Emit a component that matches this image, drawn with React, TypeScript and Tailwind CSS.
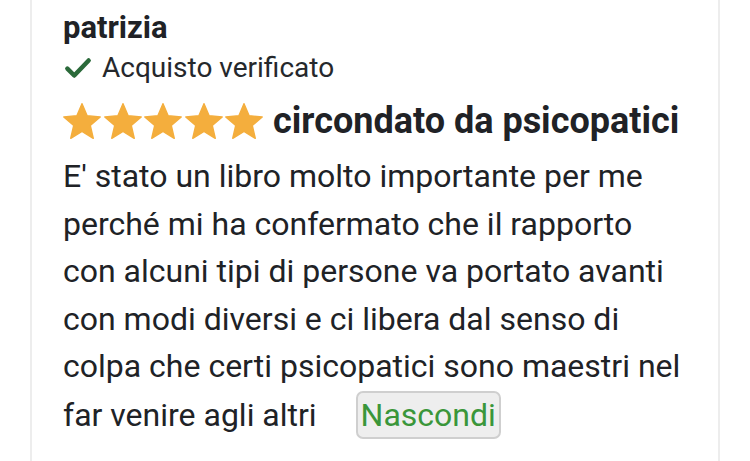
import React from "react";

const Star = () => (
  <svg viewBox="1.6 1.6 20.8 19.8" className="w-[38px] h-[36px]" fill="#f4ae3d" stroke="#f4ae3d" strokeWidth="0.8" strokeLinejoin="round">
    <path d="M12 17.27L18.18 21l-1.64-7.03L22 9.24l-7.19-.61L12 2 9.19 8.63 2 9.24l5.46 4.73L5.82 21z" />
  </svg>
);

export default function App() {
  return (
    <div className="w-[750px] h-[461px] overflow-hidden bg-white" style={{ fontFamily: "Roboto, sans-serif" }}>
      <div className="ml-[30px] w-[690px] h-full border-x-2 border-[#ededed] pl-[31px] text-[#202226]">
        <div className="w-[624px]">
          <div className="text-[31px] font-bold leading-[36px] pt-[10px]">patrizia</div>
          <div className="flex items-center gap-[9px] mt-[6px] text-[28px] leading-[32px] text-[#25282c]">
            <svg viewBox="0 0 24 24" className="w-[30px] h-[30px]" fill="none" stroke="#2b6a3a" strokeWidth="3.6" strokeLinecap="round" strokeLinejoin="round">
              <path d="M3.5 12.5l5.5 5.5L20.5 6" />
            </svg>
            <span>Acquisto verificato</span>
          </div>
          <div className="flex items-center mt-[17px]">
            <div className="flex gap-[2.5px]">
              <Star />
              <Star />
              <Star />
              <Star />
              <Star />
            </div>
            <span className="ml-[10px] text-[36px] font-bold leading-[40px] whitespace-nowrap">circondato da psicopatici</span>
          </div>
          <p className="text-[32px] leading-[47.6px] mt-[12px] text-[#202226]">
            E' stato un libro molto importante per me perché mi ha confermato che il rapporto con alcuni tipi di persone va portato avanti con modi diversi e ci libera dal senso di colpa che certi psicopatici sono maestri nel far venire agli altri{" "}
            <button className="ml-[31px] px-[3px] rounded-[7px] border-2 border-[#cfcfcf] bg-[#eeeeee] text-[#3a963a] leading-[44px]">
              Nascondi
            </button>
          </p>
        </div>
      </div>
    </div>
  );
}
